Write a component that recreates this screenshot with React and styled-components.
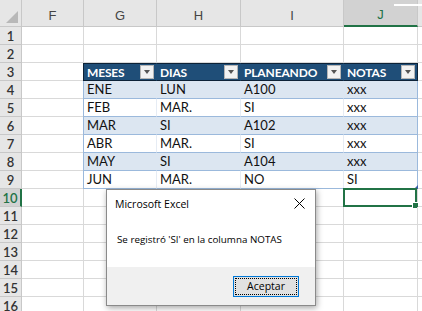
import React from 'react';
import styled, { createGlobalStyle, css } from 'styled-components';

const GlobalStyle = createGlobalStyle`
  html, body {
    margin: 0;
    padding: 0;
    background: #ffffff;
    overflow: hidden;
  }
`;

const Page = styled.div`
  position: relative;
  width: 422px;
  height: 311px;
  overflow: hidden;
  font-family: Lato, "Liberation Sans", sans-serif;
`;

const Sheet = styled.div`
  display: grid;
  grid-template-columns: 22px 62px 73px 84px 103px 74px 1fr;
  grid-template-rows: 27px repeat(16, 18px);
`;

const Corner = styled.div`
  position: relative;
  background: #e6e6e6;
  border-right: 1px solid #c8c8c8;
  border-bottom: 1px solid #c8c8c8;
  box-sizing: border-box;

  &::after {
    content: "";
    position: absolute;
    right: 3px;
    bottom: 3px;
    border-left: 12px solid transparent;
    border-bottom: 12px solid #b8b8b8;
  }
`;

const ColHead = styled.div`
  position: relative;
  display: flex;
  align-items: flex-end;
  justify-content: center;
  padding-bottom: 3px;
  box-sizing: border-box;
  background: ${(p) => (p.$active ? '#d2d2d2' : '#e6e6e6')};
  border-right: 1px solid #c8c8c8;
  border-bottom: ${(p) => (p.$active ? '2px solid #217346' : '1px solid #c8c8c8')};
  color: ${(p) => (p.$active ? '#217346' : '#444444')};
  font-size: 13px;
  font-family: "Liberation Sans", sans-serif;
`;

const TopStrip = styled.div`
  position: absolute;
  right: 0;
  top: 4px;
  width: 29px;
  height: 2px;
  background: #ffffff;
`;

const RowHead = styled.div`
  display: flex;
  align-items: center;
  justify-content: center;
  box-sizing: border-box;
  background: ${(p) => (p.$active ? '#d2d2d2' : '#e6e6e6')};
  border-bottom: 1px solid #c8c8c8;
  border-right: ${(p) => (p.$active ? '2px solid #217346' : '1px solid #c8c8c8')};
  color: ${(p) => (p.$active ? '#217346' : '#333333')};
  font-size: 13px;
  font-weight: 600;
`;

const Cell = styled.div`
  position: relative;
  display: flex;
  align-items: flex-end;
  justify-content: space-between;
  padding: 0 2px 1px 3px;
  box-sizing: border-box;
  font-size: 13px;
  color: #111111;
  border-right: 1px solid #d9d9d9;
  border-bottom: 1px solid #d9d9d9;
  white-space: nowrap;

  ${(p) =>
    p.$kind === 'head' &&
    css`
      background: #1f4e78;
      color: #ffffff;
      font-weight: 700;
      font-size: 12px;
      letter-spacing: -0.15px;
      border-top: 1px solid #0d2237;
      border-bottom: 1px solid #0d2237;
      border-right: 1px solid #1f4e78;
      align-items: center;
      padding-bottom: 0;
    `}

  ${(p) =>
    p.$kind === 'band' &&
    css`
      background: #dce6f1;
      border-right: 1px solid #dce6f1;
      border-bottom: 1px solid #9bb9dc;
    `}

  ${(p) =>
    p.$kind === 'plain' &&
    css`
      background: #ffffff;
      border-right: 1px solid #e6ecf4;
      border-bottom: 1px solid #9bb9dc;
    `}

  ${(p) => p.$first && css`border-left: 1px solid ${p.$kind === 'head' ? '#0d2237' : '#9bb9dc'};`}
  ${(p) => p.$first && css`margin-left: -1px;`}
  ${(p) => p.$last && css`border-right: 1px solid ${p.$kind === 'head' ? '#0d2237' : '#9bb9dc'};`}
`;

const Selected = styled.div`
  position: absolute;
  inset: -1px 0 -1px -1px;
  border: 2px solid #217346;

  &::after {
    content: "";
    position: absolute;
    right: -4px;
    bottom: -4px;
    width: 5px;
    height: 5px;
    background: #217346;
    border: 1px solid #ffffff;
  }
`;

const ResizeMark = styled.div`
  position: absolute;
  right: -1px;
  bottom: -1px;
  border-left: 4px solid transparent;
  border-bottom: 4px solid #3a5fa8;
`;

const Filter = styled.span`
  display: flex;
  align-items: center;
  justify-content: center;
  flex: none;
  width: 14px;
  height: 14px;
  box-sizing: border-box;
  background: #f2f2f2;
  border: 1px solid #b5b5b5;

  &::after {
    content: "";
    border-left: 3.5px solid transparent;
    border-right: 3.5px solid transparent;
    border-top: 4px solid #555555;
  }
`;

const Dialog = styled.div`
  position: absolute;
  left: 106px;
  top: 189px;
  width: 210px;
  height: 117px;
  box-sizing: border-box;
  background: #ffffff;
  border: 1px solid #8a8a8a;
  box-shadow: 1px 2px 6px rgba(0, 0, 0, 0.35);
  display: flex;
  flex-direction: column;
  font-family: "Open Sans", "Noto Sans", sans-serif;
  font-size: 10.5px;
  color: #000000;
`;

const TitleBar = styled.div`
  display: flex;
  align-items: center;
  justify-content: space-between;
  height: 27px;
  padding: 0 10px 0 8px;
`;

const Close = styled.svg`
  width: 11px;
  height: 11px;
`;

const Message = styled.div`
  flex: 1;
  display: flex;
  align-items: center;
  padding: 0 0 6px 10px;
  font-size: 9.8px;
`;

const Footer = styled.div`
  display: flex;
  justify-content: flex-end;
  align-items: center;
  height: 38px;
  padding-right: 16px;
  background: #f0f0f0;
`;

const Button = styled.button`
  width: 66px;
  height: 21px;
  padding: 0;
  font: inherit;
  color: #000000;
  background: #e1e1e1;
  border: 1px solid #0078d7;
  outline: 1px dotted #000000;
  outline-offset: -3px;
`;

const cols = ['F', 'G', 'H', 'I', 'J'];

const table = [
  ['MESES', 'DIAS', 'PLANEANDO', 'NOTAS'],
  ['ENE', 'LUN', 'A100', 'xxx'],
  ['FEB', 'MAR.', 'SI', 'xxx'],
  ['MAR', 'SI', 'A102', 'xxx'],
  ['ABR', 'MAR.', 'SI', 'xxx'],
  ['MAY', 'SI', 'A104', 'xxx'],
  ['JUN', 'MAR.', 'NO', 'SI'],
];

const App = () => {
  const rows = [];
  for (let r = 1; r <= 16; r++) {
    const t = r >= 3 && r <= 9 ? table[r - 3] : null;
    const kind = r === 3 ? 'head' : t ? (r % 2 === 0 ? 'band' : 'plain') : null;
    rows.push(
      <React.Fragment key={r}>
        <RowHead $active={r === 10}>{r}</RowHead>
        <Cell />
        {[0, 1, 2, 3].map((c) => (
          <Cell key={c} $kind={kind} $first={t && c === 0} $last={t && c === 3}>
            {t ? t[c] : ''}
            {kind === 'head' && <Filter />}
            {r === 9 && c === 3 && <ResizeMark />}
            {r === 10 && c === 3 && <Selected />}
          </Cell>
        ))}
        <Cell />
      </React.Fragment>
    );
  }

  return (
    <Page>
      <GlobalStyle />
      <Sheet>
        <Corner />
        {cols.map((c) => (
          <ColHead key={c} $active={c === 'J'}>{c}</ColHead>
        ))}
        <ColHead>
          <TopStrip />
        </ColHead>
        {rows}
      </Sheet>
      <Dialog>
        <TitleBar>
          <span>Microsoft Excel</span>
          <Close viewBox="0 0 11 11">
            <path d="M0.5 0.5 L10.5 10.5 M10.5 0.5 L0.5 10.5" stroke="#000" strokeWidth="1" />
          </Close>
        </TitleBar>
        <Message>Se registró 'SI' en la columna NOTAS</Message>
        <Footer>
          <Button>Aceptar</Button>
        </Footer>
      </Dialog>
    </Page>
  );
};

export default App;
